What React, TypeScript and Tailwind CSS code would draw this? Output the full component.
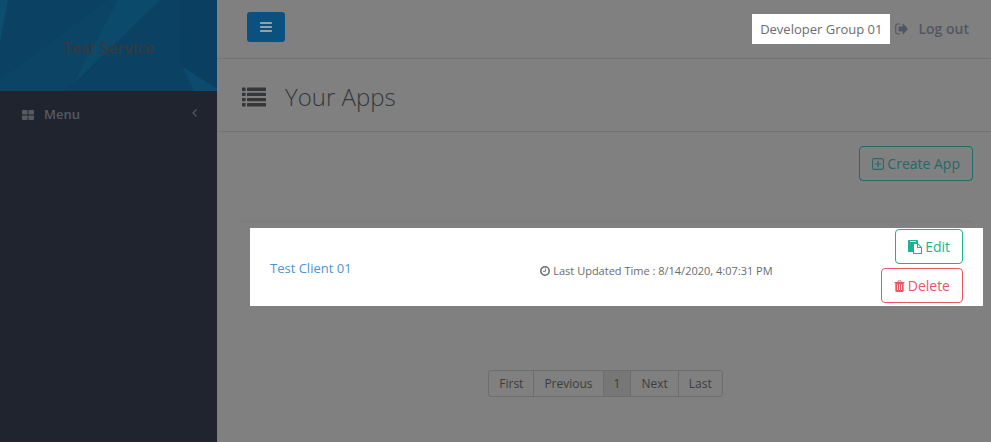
import type { ReactNode } from 'react';

type IconProps = { className?: string };

const PAGES = ['First', 'Previous', '1', 'Next', 'Last'];

function ThLargeIcon({ className }: IconProps) {
  return (
    <svg viewBox="0 0 12 10" className={className} fill="currentColor" aria-hidden>
      <rect x="0" y="0" width="5.6" height="4.6" rx="0.9" />
      <rect x="6.4" y="0" width="5.6" height="4.6" rx="0.9" />
      <rect x="0" y="5.4" width="5.6" height="4.6" rx="0.9" />
      <rect x="6.4" y="5.4" width="5.6" height="4.6" rx="0.9" />
    </svg>
  );
}

function AngleLeftIcon({ className }: IconProps) {
  return (
    <svg viewBox="0 0 5 8" className={className} fill="none" stroke="currentColor" strokeWidth="1.1" aria-hidden>
      <path d="M4.5.5 1 4l3.500 3.500" />
    </svg>
  );
}

function BarsIcon({ className }: IconProps) {
  return (
    <svg viewBox="0 0 12 10" className={className} fill="currentColor" aria-hidden>
      <rect y="0" width="12" height="2" rx="0.4" />
      <rect y="4" width="12" height="2" rx="0.4" />
      <rect y="8" width="12" height="2" rx="0.4" />
    </svg>
  );
}

function ListIcon({ className }: IconProps) {
  return (
    <svg viewBox="0 0 24 20" className={className} fill="currentColor" aria-hidden>
      {[0.5, 5.7, 10.900, 16.100].map((y) => (
        <g key={y}>
          <rect x="0" y={y} width="3.600" height="3.400" rx="0.5" />
          <rect x="5" y={y} width="19" height="3.400" rx="0.5" />
        </g>
      ))}
    </svg>
  );
}

function SignOutIcon({ className }: IconProps) {
  return (
    <svg viewBox="0 0 13 12" className={className} aria-hidden>
      <path d="M5 1H2.600A1.900 1.900 0 0 0 .7 2.900v6.200A1.900 1.900 0 0 0 2.600 11H5" fill="none" stroke="currentColor" strokeWidth="1.1" />
      <path d="M7.600 1.300c0-.5.5-.7.9-.4l4.100 4.600c.3.3.3.7 0 1l-4.100 4.600c-.4.3-.9.1-.9-.4V8.400H4.100a.6.6 0 0 1-.6-.6V4.200c0-.3.3-.6.6-.6h3.500z" fill="currentColor" />
    </svg>
  );
}

function PlusSquareIcon({ className }: IconProps) {
  return (
    <svg viewBox="0 0 12 12" className={className} fill="none" stroke="currentColor" aria-hidden>
      <rect x="0.6" y="0.6" width="10.8" height="10.8" rx="1.7" strokeWidth="1.1" />
      <path d="M6 2.800v6.400M2.800 6h6.400" strokeWidth="1.2" />
    </svg>
  );
}

function ClockIcon({ className }: IconProps) {
  return (
    <svg viewBox="0 0 10 10" className={className} fill="none" stroke="currentColor" aria-hidden>
      <circle cx="5" cy="5" r="4.2" strokeWidth="1.5" />
      <path d="M5.400 2.400v3H3" strokeWidth="0.9" />
    </svg>
  );
}

function PasteIcon({ className }: IconProps) {
  return (
    <svg viewBox="0 0 1792 1792" className={className} fill="currentColor" aria-hidden>
      <path d="M768 1664h896v-640h-416q-40 0-68-28t-28-68v-416h-384v1152zm256-1440v-64q0-13-9.500-22.500t-22.500-9.500h-704q-13 0-22.500 9.500t-9.500 22.500v64q0 13 9.500 22.500t22.500 9.500h704q13 0 22.500-9.500t9.500-22.500zm256 672h299l-299-299v299zm512 128v672q0 40-28 68t-68 28h-960q-40 0-68-28t-28-68v-160h-544q-40 0-68-28t-28-68v-1344q0-40 28-68t68-28h1088q40 0 68 28t28 68v328q21 13 36 28l408 408q28 28 48 76t20 88z" />
    </svg>
  );
}

function TrashIcon({ className }: IconProps) {
  return (
    <svg viewBox="0 0 10 12" className={className} aria-hidden>
      <path d="M3.200 2.200 3.700.8h2.600l.5 1.400" fill="none" stroke="currentColor" strokeWidth="0.9" />
      <path d="M0 2h10v1.200H0z" fill="currentColor" />
      <path
        fillRule="evenodd"
        d="M.8 3h8.400v7.600c0 .8-.5 1.400-1.100 1.400H1.900C1.300 12 .8 11.400.8 10.600zM2.500 4.600v5.400h.9V4.600zm2.050 0v5.400h.9V4.600zm2.050 0v5.400h.9V4.600z"
        fill="currentColor"
      />
    </svg>
  );
}

function OutlineButton({ tone, children }: { tone: string; children: ReactNode }) {
  return (
    <button
      type="button"
      className={`flex h-[35px] items-center gap-[3px] rounded-[4px] border px-3 text-sm ${tone}`}
    >
      {children}
    </button>
  );
}

function Sidebar() {
  return (
    <aside className="w-[217px] shrink-0 bg-[#20242f]">
      <div className="relative flex h-[91px] items-center justify-center overflow-hidden bg-[#0b4264]">
        <svg
          viewBox="0 0 217 91"
          preserveAspectRatio="none"
          className="absolute inset-0 h-full w-full"
          aria-hidden
        >
          <path d="M0 0h8L0 42z" fill="#0c4d70" />
          <path d="M0 80 108 0h10L73 83 64 91H0z" fill="#0c4466" />
          <path d="M118 0h42L73 84z" fill="#0c4a6c" />
          <path d="M180 0h37v87l-36-20z" fill="#0b3f61" />
          <path d="m183 67 34 22v2h-23z" fill="#0c4b6e" />
        </svg>
        <span className="relative mt-1 text-base leading-6 font-semibold text-[#343a40]">
          Test Service
        </span>
      </div>
      <nav>
        <a href="#menu" className="flex h-[47px] items-center pr-5 pl-[22px] text-[13px] font-semibold text-[#555a63]">
          <ThLargeIcon className="h-[10px] w-3" />
          <span className="ml-[10px]">Menu</span>
          <AngleLeftIcon className="mb-1 ml-auto h-2 w-[5px]" />
        </a>
      </nav>
    </aside>
  );
}

export default function App() {
  return (
    <div className="flex min-h-screen bg-[#808080] font-['Open_Sans',sans-serif] text-[#36383a]">
      <Sidebar />
      <main className="min-w-0 flex-1">
        <header className="flex h-[59px] items-center border-b border-[#747475] pr-[22px] pb-1 pl-[30px]">
          <button
            type="button"
            aria-label="Toggle menu"
            className="flex h-[30px] w-[38px] items-center justify-center rounded-[3px] bg-[#0a5180] text-[#9a9fa2]"
          >
            <BarsIcon className="h-[10px] w-3" />
          </button>
          <span className="mt-[3px] ml-auto bg-white px-2 py-1 text-[13px] leading-[22px] text-[#6b6d6f]">
            Developer Group 01
          </span>
          <a href="#logout" className="mt-[3px] ml-[5px] flex items-center gap-[10px] text-sm font-semibold text-[#535660]">
            <SignOutIcon className="h-3 w-[13px]" />
            Log out
          </a>
        </header>

        <div className="flex h-[73px] items-center gap-[19px] border-b border-[#747475] pt-1 pl-[25px]">
          <ListIcon className="h-5 w-6 text-[#343637]" />
          <h1 className="text-2xl font-light">Your Apps</h1>
        </div>

        <section className="pr-[18px] pl-[21px]">
          <div className="flex h-[90px] justify-end border-b border-[#7a7a7a] pt-[14px]">
            <OutlineButton tone="border-[#236a68] text-[#236a68]">
              <PlusSquareIcon className="h-3 w-3" />
              Create App
            </OutlineButton>
          </div>

          <div className="mt-[6px] -mr-[10px] ml-3 flex h-[78px] items-center bg-white px-5">
            <a href="#client" className="w-[39%] pt-1 text-[13px] text-[#4c94d0]">
              Test Client 01
            </a>
            <div className="flex items-center gap-[3px] pt-2 text-[11px] text-[#696b6d]">
              <ClockIcon className="h-[10px] w-[10px]" />
              Last Updated Time : 8/14/2020, 4:07:31 PM
            </div>
            <div className="ml-auto flex flex-col items-end gap-1 pb-[2px]">
              <OutlineButton tone="border-[#1ab394] text-[#1ab394]">
                <PasteIcon className="h-[14px] w-[14px]" />
                Edit
              </OutlineButton>
              <OutlineButton tone="border-[#ed5565] text-[#ed5565]">
                <TrashIcon className="h-3 w-[11px]" />
                Delete
              </OutlineButton>
            </div>
          </div>

          <nav aria-label="Pagination" className="mt-16 flex justify-center">
            <div className="flex rounded-[3px] border border-[#6e6e6e]">
              {PAGES.map((page) => (
                <button
                  key={page}
                  type="button"
                  aria-current={page === '1' ? 'page' : undefined}
                  className="h-[25px] border-r border-[#6e6e6e] px-[10px] text-xs text-[#3b3d3f] last:border-r-0 aria-[current=page]:bg-[#777777]"
                >
                  {page}
                </button>
              ))}
            </div>
          </nav>
        </section>
      </main>
    </div>
  );
}
